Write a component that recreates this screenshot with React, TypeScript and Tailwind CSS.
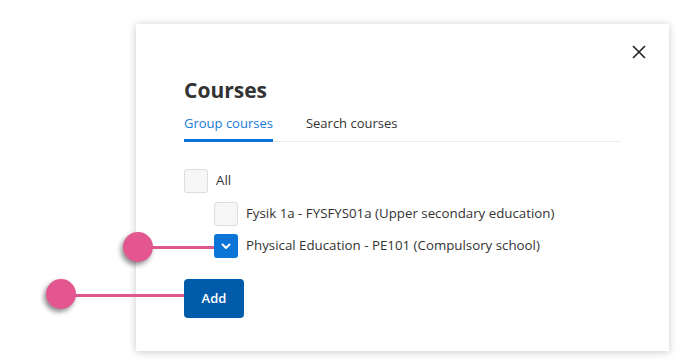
export default function App() {
  const items = [
    { label: 'Fysik 1a - FYSFYS01a (Upper secondary education)', checked: false },
    { label: 'Physical Education - PE101 (Compulsory school)', checked: true },
  ]

  return (
    <div className="relative w-[692px] h-[364px] bg-white overflow-hidden pl-[136px] pt-[24px] font-['Open_Sans',sans-serif] text-[#333]">
      <div className="relative w-[533px] h-[327px] bg-white shadow-[0_1px_8px_rgba(0,0,0,0.22)] px-12 pt-[51px]">
        <button className="absolute left-[496px] top-[21px] w-[14px] h-[14px] text-[#222]">
          <svg viewBox="0 0 14 14" className="w-[14px] h-[14px]" fill="none" stroke="currentColor" strokeWidth={1.6}>
            <path d="M1 1l12 12M13 1L1 13" />
          </svg>
        </button>

        <h1 className="text-[21px] leading-[30px] font-bold text-[#333]">Courses</h1>

        <div className="mt-[8px] flex gap-[33px] border-b border-[#ebebeb] text-[13px] leading-[20px]">
          <div className="-mb-px pb-[6px] border-b-[3px] border-[#0a74d8] text-[#1a7ad9]">Group courses</div>
          <div className="-mb-px pb-[6px] text-[#333]">Search courses</div>
        </div>

        <div className="mt-[27px] flex flex-col gap-[8.5px] text-[13.3px]">
          <div className="flex items-center gap-2">
            <span className="w-6 h-6 rounded-[3px] border border-[#dedede] bg-[#f6f6f6]" />
            <span>All</span>
          </div>
          {items.map((it) => (
            <div key={it.label} className="flex items-center gap-2 pl-[30px]">
              {it.checked ? (
                <span className="w-6 h-6 rounded-[3px] bg-[#0b74d7] flex items-center justify-center">
                  <svg viewBox="0 0 12 12" className="w-3 h-3" fill="none" stroke="white" strokeWidth={2} strokeLinecap="round" strokeLinejoin="round">
                    <path d="M2.5 4.5L6 8l3.5-3.5" />
                  </svg>
                </span>
              ) : (
                <span className="w-6 h-6 rounded-[3px] border border-[#dedede] bg-[#f6f6f6]" />
              )}
              <span>{it.label}</span>
            </div>
          ))}
        </div>

        <button className="mt-[21px] w-[60px] h-[39px] rounded-[4px] bg-[#005bab] text-white text-[13px] font-semibold">
          Add
        </button>
      </div>

      <div className="absolute left-[138px] top-[246px] w-[76px] h-[3px] bg-[#e0578f]" />
      <div className="absolute left-[123px] top-[232px] w-[30px] h-[30px] rounded-full bg-[#e4568f] shadow-[-2px_3px_5px_rgba(0,0,0,0.45)]" />

      <div className="absolute left-[61px] top-[294px] w-[123px] h-[3px] bg-[#e0578f]" />
      <div className="absolute left-[46px] top-[279px] w-[30px] h-[30px] rounded-full bg-[#e4568f] shadow-[-2px_3px_5px_rgba(0,0,0,0.45)]" />
    </div>
  )
}
